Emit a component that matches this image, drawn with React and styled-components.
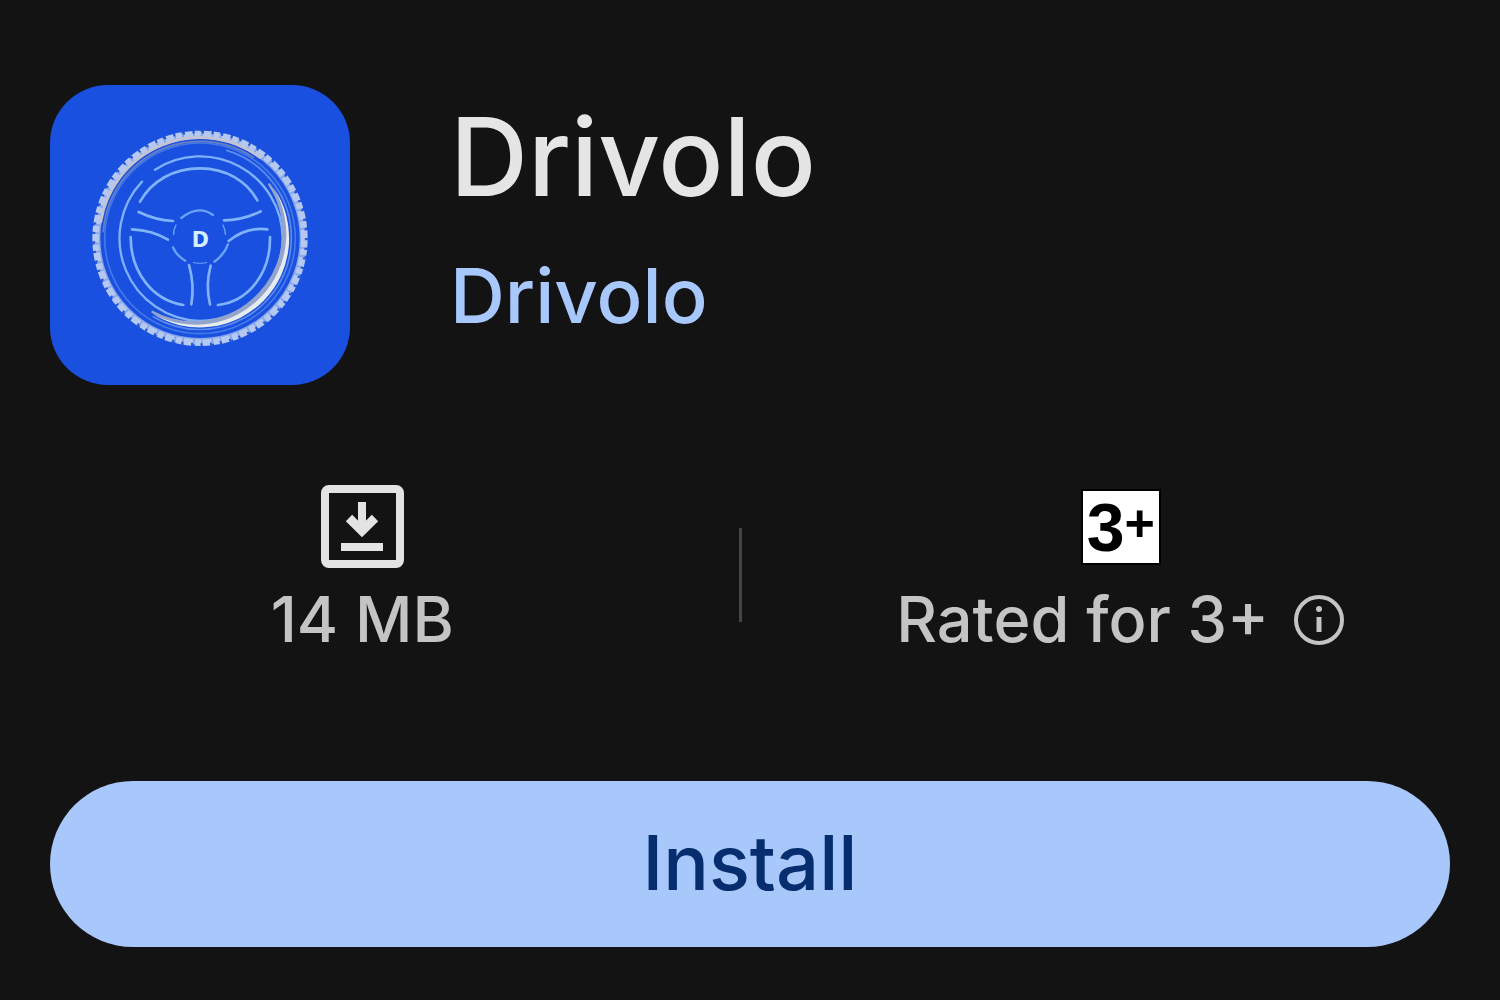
import React from 'react'
import styled, { createGlobalStyle } from 'styled-components';

const GlobalStyle = createGlobalStyle`
    * {
        box-sizing: border-box;
    }

    body {
        margin: 0;
        background: #131313;
        font-family: Inter, "Liberation Sans", sans-serif;
    }
`;

const Page = styled.main`
    display: flex;
    flex-direction: column;
    padding: 85px 0 53px;
`;

const Header = styled.header`
    display: flex;
    gap: 100px;
    padding: 0 50px;
`;

const AppIcon = styled.svg`
    width: 300px;
    height: 300px;
    flex-shrink: 0;
    border-radius: 58px;
    background: #1a50df;
`;

const Titles = styled.div`
    display: flex;
    flex-direction: column;
    align-items: flex-start;
    padding-top: 12px;
`;

const AppName = styled.h1`
    margin: 0;
    font-size: 108px;
    line-height: 120px;
    font-weight: 500;
    color: #e5e5e5;
`;

const Developer = styled.a`
    margin-top: 28px;
    font-size: 76px;
    line-height: 100px;
    font-weight: 500;
    color: #a8c7fa;
    text-decoration: none;
`;

const Stats = styled.section`
    display: grid;
    grid-template-columns: 37fr 3px 38fr;
    margin-top: 100px;
`;

const Stat = styled.div`
    display: flex;
    flex-direction: column;
    align-items: center;
    padding-right: ${props => props.$inset || '0'};
`;

const StatIcon = styled.div`
    display: flex;
    align-items: center;
    height: 84px;
`;

const StatLabel = styled.div`
    display: flex;
    align-items: center;
    gap: 24px;
    margin-top: 10px;
    font-size: 63px;
    line-height: 80px;
    font-weight: 500;
    color: #c4c4c4;
    white-space: nowrap;
`;

const Divider = styled.div`
    height: 94px;
    margin-top: 43px;
    background: #454545;
`;

const AgeBadge = styled.div`
    display: flex;
    align-items: center;
    justify-content: center;
    width: 80px;
    height: 76px;
    border: 2px solid #000;
    background: #fff;
    color: #000;
    font-family: "Liberation Sans", sans-serif;
    font-size: 68px;
    line-height: 72px;
    font-weight: 700;
`;

const Plus = styled.span`
    padding-bottom: 8px;
    font-size: 52px;
`;

const InfoButton = styled.button`
    display: flex;
    padding: 2px 0 0;
    border: 0;
    background: none;
    color: inherit;
    cursor: pointer;
`;

const InstallButton = styled.button`
    height: 166px;
    margin: 122px 50px 0;
    padding: 0 0 4px;
    border: 0;
    border-radius: 83px;
    background: #a8c7fa;
    color: #062e6f;
    font-family: inherit;
    font-size: 76px;
    line-height: 100px;
    font-weight: 500;
    cursor: pointer;
`;

const WheelLogo = () => (
    <AppIcon viewBox="30 30 900 900" fill="none" strokeLinecap="round" role="img" aria-label="Drivolo logo">
        {/* tyre */}
        <circle cx="480" cy="490" r="309" stroke="#86a5ea" strokeWidth="20" />
        <circle cx="480" cy="490" r="313" stroke="#b4c8f0" strokeWidth="20" strokeDasharray="27 5 19 6" strokeLinecap="butt" />
        <circle cx="480" cy="490" r="319" stroke="#2456d6" strokeWidth="9" strokeDasharray="6 23" strokeLinecap="butt" />
        <path d="M182 440A302 302 0 0 1 660 247" stroke="#c3c3d6" strokeWidth="9" />
        <path d="M190 470A291 291 0 0 1 480 199A291 291 0 0 1 640 247" stroke="#6c7fc0" strokeWidth="5" />
        <circle cx="480" cy="490" r="286" stroke="#4479e8" strokeWidth="5" />
        {/* rim */}
        <path d="M345 284A248 248 0 0 1 728 490A248 248 0 0 1 480 738A248 248 0 0 1 306 320" stroke="#7fb0fa" strokeWidth="7" />
        <path d="M560 226A274 274 0 0 1 754 490A274 274 0 0 1 340 725" stroke="#5b8cec" strokeWidth="5" />
        <path d="M686 326A263 263 0 0 1 335 709A268 268 0 0 0 686 326Z" fill="#93a5cc" stroke="#93a5cc" strokeWidth="6" />
        <path d="M700 337A268 268 0 0 1 335 715A272 272 0 0 0 700 337Z" fill="#e6ebee" />
        {/* openings between the spokes */}
        <g stroke="#7fb4fb" strokeWidth="8">
            <path d="M300 380C335 318 400 280 480 280C558 280 620 318 652 376" />
            <path d="M272 486C272 590 336 675 430 690" />
            <path d="M690 486C692 590 630 678 534 690" />
            <path d="M296 411Q345 435 399 438" />
            <path d="M276 463Q335 465 384 494" />
            <path d="M662 409Q610 435 552 436" />
            <path d="M682 463Q620 455 566 498" />
            <path d="M447 570Q464 630 454 688" />
            <path d="M512 572Q496 630 510 688" />
        </g>
        {/* hub */}
        <g stroke="#6da3f6" strokeWidth="7">
            <path d="M424 429Q475 388 519 420" />
            <path d="M399 517Q410 543 436 557" />
            <path d="M564 508Q552 540 523 560" />
            <path d="M408 450Q400 466 401 478" strokeWidth="4" />
            <path d="M549 450Q556 465 556 478" strokeWidth="4" />
            <path d="M460 563Q480 568 500 563" strokeWidth="3" />
        </g>
        <text x="481" y="515" textAnchor="middle" fill="#d3effc" fontFamily="DejaVu Sans" fontWeight="700" fontSize="62">D</text>
    </AppIcon>
)

const DownloadIcon = () => (
    <svg width="84" height="84" viewBox="0 0 84 84" fill="none" stroke="#e3e3e3" strokeWidth="8" aria-hidden="true">
        <rect x="5" y="4" width="75" height="75" rx="4" />
        <path d="M42 17V46" />
        <path d="M29 33L42 46L55 33" strokeWidth="9" />
        <path d="M34 40H50L42 49Z" fill="#e3e3e3" stroke="none" />
        <path d="M21 62H63" />
    </svg>
)

const InfoIcon = () => (
    <svg width="52" height="52" viewBox="0 0 52 52" fill="none" stroke="currentColor" aria-hidden="true">
        <circle cx="26" cy="26" r="23" strokeWidth="4" />
        <path d="M26 23V38" strokeWidth="5" />
        <circle cx="26" cy="15" r="3" fill="currentColor" stroke="none" />
    </svg>
)

const App = () => {
  return (
    <>
      <GlobalStyle />
      <Page>
        <Header>
          <WheelLogo />
          <Titles>
            <AppName>Drivolo</AppName>
            <Developer href="#developer">Drivolo</Developer>
          </Titles>
        </Header>

        <Stats>
          <Stat $inset="14px">
            <StatIcon><DownloadIcon /></StatIcon>
            <StatLabel>14 MB</StatLabel>
          </Stat>
          <Divider />
          <Stat>
            <StatIcon>
              <AgeBadge>3<Plus>+</Plus></AgeBadge>
            </StatIcon>
            <StatLabel>
              Rated for 3+
              <InfoButton type="button" aria-label="About this rating"><InfoIcon /></InfoButton>
            </StatLabel>
          </Stat>
        </Stats>

        <InstallButton type="button">Install</InstallButton>
      </Page>
    </>
  )
}

export default App
